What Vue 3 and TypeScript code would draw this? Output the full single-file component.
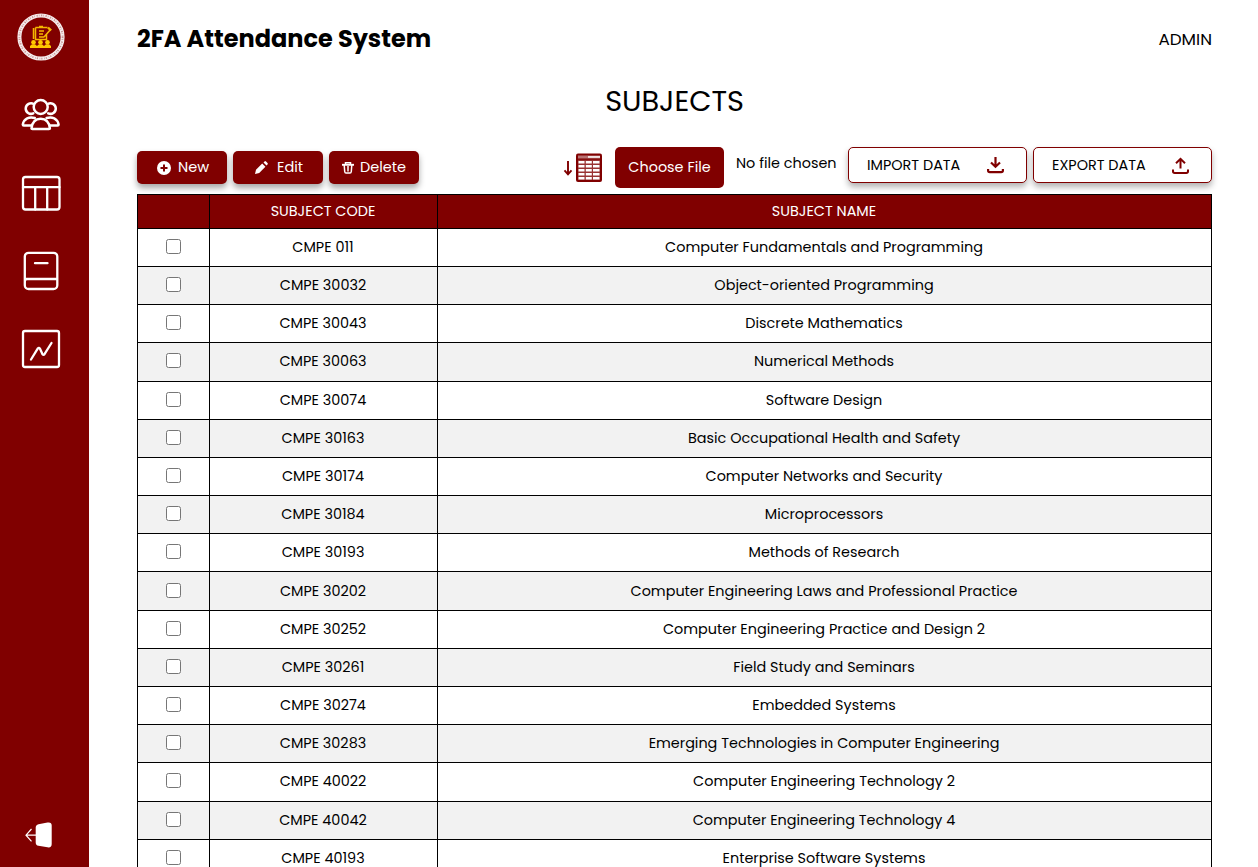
<script setup lang="ts">
interface Subject {
  code: string
  name: string
  checked: boolean
}

const entries: [string, string][] = [
  ['CMPE 011', 'Computer Fundamentals and Programming'],
  ['CMPE 30032', 'Object-oriented Programming'],
  ['CMPE 30043', 'Discrete Mathematics'],
  ['CMPE 30063', 'Numerical Methods'],
  ['CMPE 30074', 'Software Design'],
  ['CMPE 30163', 'Basic Occupational Health and Safety'],
  ['CMPE 30174', 'Computer Networks and Security'],
  ['CMPE 30184', 'Microprocessors'],
  ['CMPE 30193', 'Methods of Research'],
  ['CMPE 30202', 'Computer Engineering Laws and Professional Practice'],
  ['CMPE 30252', 'Computer Engineering Practice and Design 2'],
  ['CMPE 30261', 'Field Study and Seminars'],
  ['CMPE 30274', 'Embedded Systems'],
  ['CMPE 30283', 'Emerging Technologies in Computer Engineering'],
  ['CMPE 40022', 'Computer Engineering Technology 2'],
  ['CMPE 40042', 'Computer Engineering Technology 4'],
  ['CMPE 40193', 'Enterprise Software Systems'],
]

const subjects: Subject[] = entries.map(([code, name]) => ({ code, name, checked: false }))
</script>

<template>
  <div class="app">
    <aside class="sidebar">
      <svg class="logo" viewBox="0 0 48 48">
        <circle cx="24" cy="24" r="21.600" fill="none" stroke="#f6ecec" stroke-width="4" />
        <circle cx="24" cy="24" r="21.600" fill="none" stroke="#a04a4a" stroke-width="1.800" stroke-dasharray="1.200 1.100 .6 1.700" opacity=".55" />
        <g fill="none" stroke="#f5b800" stroke-width="1.500">
          <path d="M18.500 14.500v12h11v-5M18.500 14.500h12M22 18h5M22 21h4M22 24h5M27 24l7-8M16.500 15v11" />
          <path d="M22 13.500h4" />
          <path d="M31 14.500l3 3" stroke-width="2.400" />
        </g>
        <g fill="#ffc800">
          <circle cx="16.500" cy="29.300" r="2.300" />
          <circle cx="23.500" cy="29.300" r="2.300" />
          <circle cx="30.500" cy="29.300" r="2.300" />
          <path d="M13 35v-2l2-1.700h3l2 1.700 2-1.700h3l2 1.700 2-1.700h3l2 1.700v2z" />
        </g>
      </svg>

      <nav class="nav">
        <svg viewBox="0 0 40 40" class="line people">
          <path d="M12.300 18.300A5.300 5.300 0 1 1 12.800 9M27.200 18.300A5.300 5.300 0 1 0 26.700 9" />
          <circle cx="19.700" cy="12" r="7" />
          <path d="M10.500 33.500c.6-6.300 3.700-9.800 9.200-9.800s8.600 3.500 9.200 9.800q0 .5-1 .5H11.500q-1 0-1-.5z" />
          <path d="M13.800 23c-5.600-1.600-10.800.4-12 6.500q0 1 1 1h7.200M25.600 23c5.600-1.600 10.800.4 12 6.500q0 1-1 1h-7.200" />
        </svg>
        <svg viewBox="0 0 40 40" class="line">
          <rect x="2" y="4" width="36.500" height="32.500" rx="2.500" />
          <path d="M2 14.200h36.500M14.200 14.200v22.300M26.200 14.200v22.300" />
        </svg>
        <svg viewBox="0 0 40 40" class="line">
          <rect x="3.800" y="1.800" width="32.500" height="36.200" rx="3.800" />
          <path d="M4.300 28h31.500M14 12.200h12.500" />
          <path d="M3.800 31a3.500 3.500 0 0 1 3.500-3" stroke-width="1.500" />
        </svg>
        <svg viewBox="0 0 40 40" class="line">
          <rect x="2" y="2" width="36" height="36" rx="2" />
          <path d="M10 30.500l7-11.300q1-1 2 .5l2.500 5.500q1 1.200 2 0l7-11.200" />
        </svg>
      </nav>

      <svg class="logout" viewBox="0 0 28 28">
        <path d="M14.500 3.200l9-1.700q4.200-.7 4.200 3v18.500q0 4-4.200 3.300l-9-1.500q-2.800-.6-2.800-3.400v-14.800q0-2.800 2.800-3.400z" fill="#fff" />
        <path d="M12 14.200H2M7.500 8L2 14.200l5.500 6.200" fill="none" stroke="#fff" stroke-width="1.200" />
      </svg>
    </aside>

    <main class="content">
      <header class="topbar">
        <h1>2FA Attendance System</h1>
        <span class="user">ADMIN</span>
      </header>

      <h2>SUBJECTS</h2>

      <div class="toolbar">
        <div class="actions">
          <button class="btn new">
            <svg width="14" height="14" viewBox="0 0 14 14">
              <circle cx="7" cy="7" r="7" fill="#fff" />
              <path d="M7 3.500v7M3.500 7h7" stroke="maroon" stroke-width="2" />
            </svg>
            <span>New</span>
          </button>
          <button class="btn edit">
            <svg width="13" height="13" viewBox="0 0 13 13" fill="#fff">
              <path d="M0 13l1-4.200L7.200 2.600l3.200 3.200L4.200 12zM8.500 1.400l1-1Q10.200-.2 11 .5L12.500 2q.7.800 0 1.500l-1 1z" />
            </svg>
            <span>Edit</span>
          </button>
          <button class="btn delete">
            <svg width="12" height="12" viewBox="0 0 12 12" fill="none" stroke="#fff">
              <path d="M0 2.800h12" stroke-width="1.900" />
              <path d="M3.500 2.500V.8h5v1.700M2.200 3l.5 6.500q.2 1.600 1.300 1.600h4q1.100 0 1.300-1.600L9.800 3" stroke-width="1.500" />
              <path d="M6 4v5.500" stroke-width="1.500" />
            </svg>
            <span>Delete</span>
          </button>
        </div>

        <div class="transfer">
          <svg class="sheet" width="40" height="30" viewBox="0 0 40 30">
            <path d="M5 8v13M1.500 17.300L5 21.300l3.500-4" fill="none" stroke="maroon" stroke-width="1.900" />
            <rect x="13" y=".5" width="26" height="28.500" rx="2" fill="maroon" />
            <path d="M15 2.500h22v3H15z" fill="#fff" opacity=".45" />
            <path d="M25 3.200h12v1.500H25z" fill="#fff" />
            <path d="M15 6.700h22V27H15z" fill="#fff" opacity=".2" />
            <g fill="#fff">
              <path v-for="n in 5" :key="n" :d="`M15.500 ${4 + n * 4}h6v2.500h-6zM22.800 ${4 + n * 4}h6v2.500h-6zM30 ${4 + n * 4}h6.500v2.500h-6.500z`" />
            </g>
          </svg>
          <button class="choose">Choose File</button>
          <span class="filename">No file chosen</span>
          <button class="outline">
            <span>IMPORT DATA</span>
            <svg width="17" height="17" viewBox="0 0 17 17" fill="none" stroke="maroon" stroke-width="2.200">
              <path d="M8.500 0v9.500M4 5.500l4.500 4.300L13 5.500" />
              <path d="M1.100 12v1.500q0 1.700 1.700 1.700h11.400q1.700 0 1.700-1.700V12" />
            </svg>
          </button>
          <button class="outline">
            <span>EXPORT DATA</span>
            <svg width="17" height="17" viewBox="0 0 17 17" fill="none" stroke="maroon" stroke-width="2">
              <path d="M8.500 11.500V2M4 6.200l4.500-4.300L13 6.200" />
              <path d="M1 12.500v1.700q0 1.700 1.700 1.700h11.600q1.700 0 1.700-1.700v-1.700" />
            </svg>
          </button>
        </div>
      </div>

      <section class="table">
        <div class="row head">
          <span></span>
          <span class="code">SUBJECT CODE</span>
          <span class="name">SUBJECT NAME</span>
        </div>
        <div v-for="s in subjects" :key="s.code" class="row">
          <span><input v-model="s.checked" type="checkbox" /></span>
          <span class="code">{{ s.code }}</span>
          <span class="name">{{ s.name }}</span>
        </div>
      </section>
    </main>
  </div>
</template>

<style>
body {
  overflow: hidden;
}
</style>

<style scoped>
.app,
.app * {
  box-sizing: border-box;
}
.app {
  display: flex;
  height: 100vh;
  overflow: hidden;
  background: #fff;
  color: #000;
  font-family: Poppins, Inter, 'Open Sans', sans-serif;
  font-size: 14.4px;
}
.sidebar {
  flex: none;
  display: flex;
  flex-direction: column;
  width: 89px;
  padding: 13px 0 18px 17px;
  background: maroon;
}
.logo {
  width: 48px;
  height: 48px;
}
.nav {
  display: flex;
  flex-direction: column;
  gap: 38px;
  margin: 34px 0 0 4px;
}
.line {
  width: 40px;
  height: 40px;
  fill: none;
  stroke: #fff;
  stroke-width: 2.3;
  stroke-linecap: round;
  stroke-linejoin: round;
}
.people {
  stroke-width: 2.5;
}
.logout {
  width: 28px;
  height: 28px;
  margin: auto 0 0 7px;
}
.content {
  flex: 1;
  padding: 0 46px 0 48px;
}
.topbar {
  display: flex;
  justify-content: space-between;
  align-items: center;
  height: 78px;
}
h1 {
  margin: 0 0 2px;
  font-size: 24px;
  font-weight: 700;
}
.user {
  font-size: 16.8px;
}
h2 {
  height: 46px;
  margin: 0;
  font-size: 28.8px;
  font-weight: 400;
  line-height: 47px;
  text-align: center;
}
.toolbar {
  display: flex;
  justify-content: space-between;
  height: 70px;
  padding-top: 23px;
}
.actions {
  display: flex;
  gap: 6px;
  padding-top: 4px;
}
button {
  display: flex;
  align-items: center;
  justify-content: center;
  padding: 0;
  border: 0;
  border-radius: 5px;
  font: inherit;
}
.btn {
  width: 90px;
  height: 33px;
  background: maroon;
  color: #fff;
  font-size: 14.5px;
  box-shadow: 0 4px 6px rgba(0, 0, 0, 0.35);
}
.new {
  gap: 7px;
  padding-left: 2px;
}
.edit {
  gap: 9px;
  padding-left: 2px;
}
.delete {
  gap: 6px;
}
.transfer {
  display: flex;
  align-items: flex-start;
}
.sheet {
  margin: 6px 12px 0 0;
}
.choose {
  width: 109px;
  height: 41px;
  background: maroon;
  color: #fff;
}
.filename {
  width: 101px;
  margin: 0 11px 0 12px;
  line-height: 32px;
  white-space: nowrap;
}
.outline {
  justify-content: space-between;
  width: 179px;
  height: 36px;
  padding: 0 22px 0 18px;
  border: 1px solid maroon;
  background: #fff;
  color: #000;
  box-shadow: 0 4px 6px rgba(0, 0, 0, 0.3);
}
.outline + .outline {
  margin-left: 6px;
}
.table {
  border: 1px solid #000;
}
.row {
  display: grid;
  grid-template-columns: 71px 228px 1fr;
  height: 38.19px;
  border-bottom: 1px solid #000;
}
.row > span {
  display: flex;
  align-items: center;
  justify-content: center;
  white-space: nowrap;
}
.row > span + span {
  border-left: 1px solid #000;
}
.row > .code,
.row > .name {
  padding-right: 1px;
}
.row:nth-child(odd) {
  background: #f2f2f2;
}
.row.head {
  height: 33.76px;
  background: maroon;
  color: #fff;
}
input {
  width: 15px;
  height: 15px;
  margin: 0 0 2px;
}
</style>
